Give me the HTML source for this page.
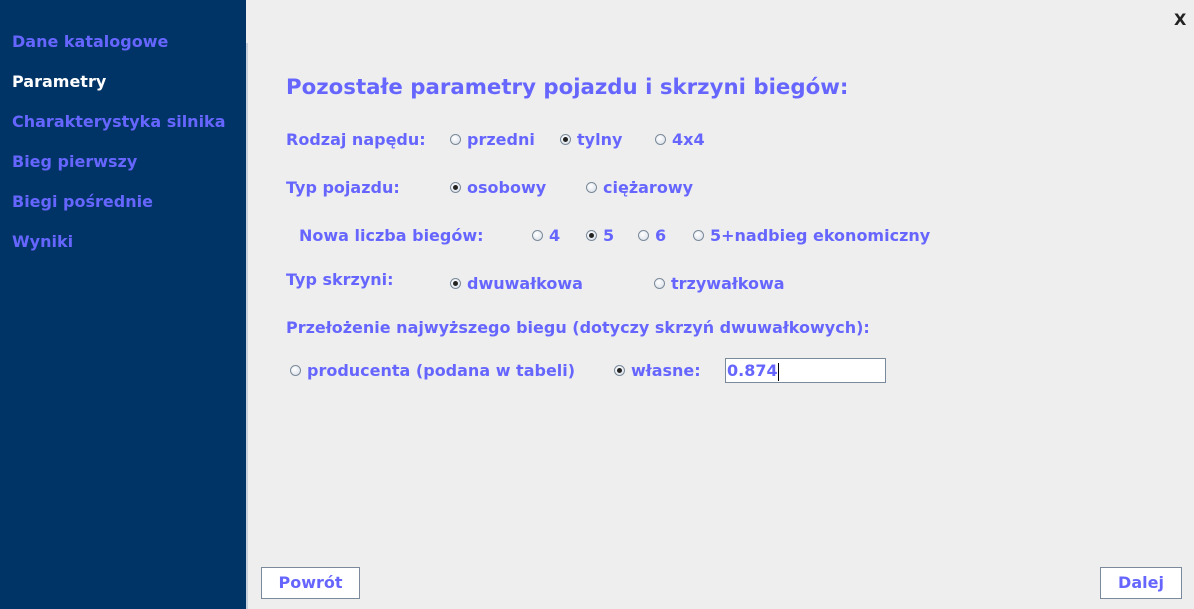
<!DOCTYPE html>
<html><head><meta charset="utf-8"><style>
body{margin:0;width:1194px;height:609px;background:#eeeeee;font-family:"DejaVu Sans","Liberation Sans",sans-serif;font-weight:bold;color:#6666ff;position:relative;overflow:hidden}
.side{position:absolute;left:0;top:0;width:246px;height:609px;background:#003366}
.strip{position:absolute;left:246px;top:43px;width:2px;height:566px;background:#c8d0dc}
.s{position:absolute;left:12px;font-size:16px;color:#6666ff}
.a{position:absolute;font-size:16px;white-space:nowrap}
.r{position:absolute;width:9px;height:9px;border:1px solid #7a8a9a;border-radius:50%;background:radial-gradient(circle at 40% 35%,#fff,#d6dde6)}
.r.on::after{content:"";position:absolute;left:2px;top:2px;width:5px;height:5px;border-radius:50%;background:#222}
.btn{position:absolute;border:1px solid #7a8a9a;background:#fff;font-size:16px;text-align:center;box-sizing:border-box}
</style></head><body>
<div class="side"></div><div class="strip"></div>
<div class="s" style="top:32px">Dane katalogowe</div>
<div class="s" style="top:72px;color:#fff">Parametry</div>
<div class="s" style="top:112px">Charakterystyka silnika</div>
<div class="s" style="top:152px">Bieg pierwszy</div>
<div class="s" style="top:192px">Biegi pośrednie</div>
<div class="s" style="top:232px">Wyniki</div>
<div class="a" style="left:1174px;top:10px;color:#222;font-size:16px">X</div>
<div class="a" style="left:286px;top:75px;font-size:21.3px">Pozostałe parametry pojazdu i skrzyni biegów:</div>

<div class="a" style="left:286px;top:130px">Rodzaj napędu:</div>
<div class="r" style="left:450px;top:134px"></div><div class="a" style="left:467px;top:130px">przedni</div>
<div class="r on" style="left:560px;top:134px"></div><div class="a" style="left:577px;top:130px">tylny</div>
<div class="r" style="left:655px;top:134px"></div><div class="a" style="left:672px;top:130px">4x4</div>

<div class="a" style="left:286px;top:178px">Typ pojazdu:</div>
<div class="r on" style="left:450px;top:182px"></div><div class="a" style="left:467px;top:178px">osobowy</div>
<div class="r" style="left:586px;top:182px"></div><div class="a" style="left:603px;top:178px">ciężarowy</div>

<div class="a" style="left:299px;top:226px">Nowa liczba biegów:</div>
<div class="r" style="left:532px;top:230px"></div><div class="a" style="left:549px;top:226px">4</div>
<div class="r on" style="left:586px;top:230px"></div><div class="a" style="left:603px;top:226px">5</div>
<div class="r" style="left:638px;top:230px"></div><div class="a" style="left:655px;top:226px">6</div>
<div class="r" style="left:693px;top:230px"></div><div class="a" style="left:710px;top:226px">5+nadbieg ekonomiczny</div>

<div class="a" style="left:286px;top:270px">Typ skrzyni:</div>
<div class="r on" style="left:450px;top:278px"></div><div class="a" style="left:467px;top:274px">dwuwałkowa</div>
<div class="r" style="left:654px;top:278px"></div><div class="a" style="left:671px;top:274px">trzywałkowa</div>

<div class="a" style="left:286px;top:318px">Przełożenie najwyższego biegu (dotyczy skrzyń dwuwałkowych):</div>
<div class="r" style="left:290px;top:365px"></div><div class="a" style="left:307px;top:361px">producenta (podana w tabeli)</div>
<div class="r on" style="left:614px;top:365px"></div><div class="a" style="left:631px;top:361px">własne:</div>
<div style="position:absolute;left:725px;top:358px;width:161px;height:25px;box-sizing:border-box;border:1px solid #7a8a9a;background:#fff;font-size:16px;padding:2px 1px">0.874<span style="display:inline-block;width:1px;height:18px;background:#000;vertical-align:middle"></span></div>

<div class="btn" style="left:261px;top:567px;width:99px;height:32px;line-height:30px">Powrót</div>
<div class="btn" style="left:1100px;top:567px;width:82px;height:32px;line-height:30px">Dalej</div>
</body></html>
